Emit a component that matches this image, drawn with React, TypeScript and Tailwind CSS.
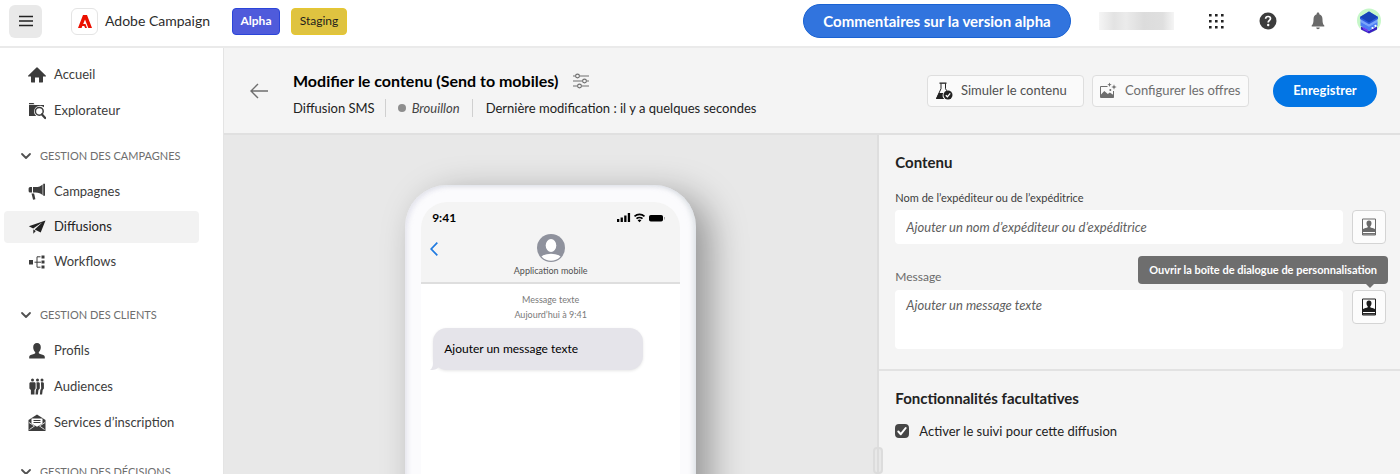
import type { ReactNode } from "react";

type IconProps = { className?: string };

function HomeIcon() {
  return (
    <svg viewBox="0 0 18 18" className="size-[18px]" fill="currentColor" aria-hidden="true">
      <path d="M17.700 9.600 9.500 1.400a.7.7 0 0 0-1 0L.3 9.600a.4.4 0 0 0 .3.8H3v5.700c0 .3.2.5.5.5H7V11.500h4v5.100h3.500c.3 0 .5-.2.5-.5v-5.700h2.400a.4.4 0 0 0 .3-.8z" />
    </svg>
  );
}

function ExplorerIcon() {
  return (
    <svg viewBox="0 0 18 18" className="size-[18px]" fill="currentColor" aria-hidden="true">
      <path d="M1 1h4.500l1 1.200H1z" />
      <path d="M1 3h15v2.300A6 6 0 0 0 6 9.300c0 2 .9 3.700 2.300 4.700H1z" />
      <circle cx="11.300" cy="9.300" r="3.900" fill="none" stroke="currentColor" strokeWidth="1.500" />
      <path d="m14 12.400 3.200 3.600" stroke="currentColor" strokeWidth="2.200" strokeLinecap="round" />
    </svg>
  );
}

function MegaphoneIcon() {
  return (
    <svg viewBox="0 0 18 18" className="size-[18px]" fill="currentColor" aria-hidden="true">
      <path d="M2.200 4H4v5.600H2.200A1.600 1.600 0 0 1 .6 8V5.600A1.600 1.600 0 0 1 2.200 4zM5 4h2.600c3 0 5.400-1 7-2.600v10.800c-1.600-1.600-4-2.600-7-2.600H5zM15.200.8h1.800v12h-1.800z" />
      <path d="M3.500 10.600h2.600l1.300 5.700-2.300.5z" />
    </svg>
  );
}

function PlaneIcon() {
  return (
    <svg viewBox="0 0 18 18" className="size-[18px]" fill="currentColor" aria-hidden="true">
      <path d="M17.500 2.500.8 8.200l4.400 2.300 9.200-6.200-7.700 7.200 6 3.100z" />
      <path d="M5.300 11.600v4.200l2.500-2.800z" />
    </svg>
  );
}

function WorkflowIcon() {
  return (
    <svg viewBox="0 0 18 18" className="size-[18px]" fill="currentColor" aria-hidden="true">
      <path d="M1 7h4v4.500H1zM13.500 2.500h3v3h-3zM13.500 7.500h3v3h-3zM13.500 12.500h3v3h-3z" />
      <path d="M6.500 9.200H13M12.500 3.800H9v10.400h3.500" fill="none" stroke="currentColor" />
    </svg>
  );
}

function ProfileIcon() {
  return (
    <svg viewBox="0 0 18 18" className="size-[18px]" fill="currentColor" aria-hidden="true">
      <path d="M9 1c2.500 0 3.800 1.700 3.800 4.200 0 2-.8 3.900-2 4.900v1.100c.3.500 1 .7 2.100 1 2.500.6 3.900 1.200 3.900 2.800v1.600H1.200V15c0-1.600 1.400-2.200 3.900-2.800 1.100-.3 1.800-.5 2.100-1v-1.100c-1.200-1-2-2.900-2-4.900C5.200 2.700 6.500 1 9 1z" />
    </svg>
  );
}

function AudienceIcon() {
  return (
    <svg viewBox="0 0 18 18" className="size-[18px]" fill="currentColor" aria-hidden="true">
      <circle cx="4.500" cy="2" r="1.500" />
      <circle cx="9.500" cy="2" r="1.500" />
      <circle cx="14" cy="2" r="1.500" />
      <path d="M2.600 4.200h3.800c.8 0 1.200.6 1.200 1.400v5L6.500 12v4.500H2.900V12L1.400 10.600v-5c0-.8.4-1.400 1.200-1.400z" />
      <path d="M8.500 4.200h1.800c1 0 1.500.6 1.500 1.400v4.800l-1.400 1.700-.5 4.400H7.500l.4-5 .8-1zM12.900 4.200h1.500c1 0 1.500.6 1.500 1.400v4.800l-1.200 1.700-.6 4.400h-2.200l.4-4.500.9-1.500z" />
    </svg>
  );
}

function EnvelopeIcon() {
  return (
    <svg viewBox="0 0 18 18" className="size-[18px]" fill="currentColor" aria-hidden="true">
      <path d="M9 .5 17.500 6v11H.5V6z" />
      <path d="M3.500 4.500h11v5L9 12.800 3.500 9.500z" fill="#fff" />
      <path d="M5.500 6.500h7M5.500 8.500h7" stroke="currentColor" />
      <path d="M1 8.500 6.500 12 1.500 15.500M17 8.500 11.500 12l5 3.500" fill="none" stroke="#fff" strokeWidth=".8" />
    </svg>
  );
}

function ChevronDown() {
  return (
    <svg viewBox="0 0 12 12" className="size-3 text-[#505050]" fill="none" stroke="currentColor" strokeWidth="1.800" strokeLinecap="round" strokeLinejoin="round" aria-hidden="true">
      <path d="m2 4 4 4 4-4" />
    </svg>
  );
}

function FlaskIcon() {
  return (
    <svg viewBox="0 0 18 18" className="size-[18px] text-[#222]" fill="currentColor" aria-hidden="true">
      <path d="M4.500.5h7v1.300h-7z" />
      <path d="M6 1.500v5.200L1.500 16.500h7M10.500 1.500v5.200l1.200 2" fill="none" stroke="currentColor" />
      <path d="M3.800 11h4.400a5.500 5.500 0 0 0 .8 6H1z" />
      <circle cx="13" cy="13" r="4.500" />
      <path d="m10.800 13.200 1.600 1.600 2.800-3.500" fill="none" stroke="#fff" strokeWidth="1.300" />
    </svg>
  );
}

function OfferIcon() {
  return (
    <svg viewBox="0 0 18 18" className="size-[18px] text-[#6e6e6e]" fill="currentColor" aria-hidden="true">
      <path d="M8.500 4.500H1.500v11h13V9" fill="none" stroke="currentColor" />
      <path d="M2 12.500 5.300 9l3.500 3 2-1.600 3.700 2.600v2.500H2z" />
      <circle cx="11.300" cy="8" r="1" />
      <path d="m10.500.5.6 1.600 1.600.6-1.600.6-.6 1.600-.6-1.600-1.600-.6 1.600-.6zM15 2.300l.7 2 2 .7-2 .7-.7 2-.7-2-2-.7 2-.7z" />
    </svg>
  );
}

function PersonalizeIcon({ className = "" }: IconProps) {
  return (
    <svg viewBox="0 0 18 18" className={"size-[18px] " + className} fill="currentColor" aria-hidden="true">
      <path d="M2.500 1h13v16h-13z" fill="none" stroke="currentColor" />
      <path d="M9 2.500c1.700 0 2.500 1.100 2.500 2.700 0 1.300-.5 2.400-1.200 3v1c.6.800 3.500.8 4.900 2V14H2.800v-2.800c1.400-1.200 4.300-1.200 4.900-2v-1c-.7-.6-1.200-1.700-1.200-3C6.500 3.600 7.300 2.500 9 2.500z" />
      <path d="M3 15.800h12" stroke="currentColor" strokeWidth="1.500" />
      <path d="M4 14.500h2.200M7.500 14.500H14" stroke="#fff" />
    </svg>
  );
}

function FiltersIcon() {
  return (
    <svg viewBox="0 0 18 18" className="size-[18px] text-[#6e6e6e]" fill="none" stroke="currentColor" strokeWidth="1.100" aria-hidden="true">
      <path d="M1 4h2.500M7.500 4H17M1 9h9.500M14.500 9H17M1 14h4.500M9.500 14H17" />
      <circle cx="5.500" cy="4" r="1.900" />
      <circle cx="12.500" cy="9" r="1.900" />
      <circle cx="7.500" cy="14" r="1.900" />
    </svg>
  );
}

function AdobeMark() {
  return (
    <svg viewBox="0 0 14 13" className="h-[13px] w-[14px]" fill="#eb1000" aria-hidden="true">
      <path d="M5 0h4l5 13h-3.700L7 4.500 5.200 9h2.300l1.500 4H7.100l-.9-1.900H4.300L3.600 13H0z" />
    </svg>
  );
}

function Avatar() {
  return (
    <svg viewBox="0 0 24 26" className="h-[26px] w-6" role="img" aria-label="Profil utilisateur">
      <circle cx="12" cy="12.500" r="12" fill="#c6f7c8" />
      <path d="m4 18.500 8 4.300 8-4.300v3L12 25.500l-8-4z" fill="#3a1fc4" />
      <path d="m3.500 13.500 8.500 4.500 8.500-4.500v4.300L12 22.800l-8.500-5z" fill="#4a7cf5" />
      <path d="m3.500 11 8.500 4.800 8.500-4.800v3L12 18.800 3.500 14z" fill="#7aa5fb" />
      <path d="m12 3.500 9 5.500v2l-9 5.200L3 11V9z" fill="#2e5be0" />
      <path d="m12 3.500 9 5.500-9 5.500L3 9z" fill="#1744b8" />
      <path d="m6 19 5 2.700v2.200l-5-2.600z" fill="#6f3df0" />
      <circle cx="15.500" cy="20" r="1.100" fill="#fff" />
      <circle cx="18.500" cy="17.800" r="1.100" fill="#fff" />
    </svg>
  );
}

type NavEntry = { label: string; icon: ReactNode; active?: boolean };

function NavList({ items, gap }: { items: NavEntry[]; gap: string }) {
  return (
    <ul className={"flex flex-col " + gap}>
      {items.map((item) => (
        <li key={item.label}>
          <a
            href="#"
            aria-current={item.active ? "page" : undefined}
            className={
              "ml-1 mr-6 flex h-8 items-center gap-2 rounded pl-6 text-[13px] " +
              (item.active ? "bg-[#f2f2f2] text-[#222]" : "text-[#3c3c3c]")
            }
          >
            {item.icon}
            {item.label}
          </a>
        </li>
      ))}
    </ul>
  );
}

function SectionToggle({ children }: { children: ReactNode }) {
  return (
    <button type="button" className="flex h-4 items-center gap-2 pl-5 text-[11px] leading-4 text-[#6e6e6e]">
      <ChevronDown />
      {children}
    </button>
  );
}

function Sidebar() {
  return (
    <nav className="flex w-[223px] shrink-0 flex-col overflow-hidden bg-white pt-[11px]">
      <NavList
        gap="gap-1"
        items={[
          { label: "Accueil", icon: <HomeIcon /> },
          { label: "Explorateur", icon: <ExplorerIcon /> },
        ]}
      />
      <div className="mt-[21px] flex flex-col gap-3">
        <SectionToggle>GESTION DES CAMPAGNES</SectionToggle>
        <NavList
          gap="gap-[3px]"
          items={[
            { label: "Campagnes", icon: <MegaphoneIcon /> },
            { label: "Diffusions", icon: <PlaneIcon />, active: true },
            { label: "Workflows", icon: <WorkflowIcon /> },
          ]}
        />
      </div>
      <div className="mt-[29px] flex flex-col gap-3">
        <SectionToggle>GESTION DES CLIENTS</SectionToggle>
        <NavList
          gap="gap-1"
          items={[
            { label: "Profils", icon: <ProfileIcon /> },
            { label: "Audiences", icon: <AudienceIcon /> },
            { label: "Services d’inscription", icon: <EnvelopeIcon /> },
          ]}
        />
      </div>
      <div className="mt-[25px]">
        <SectionToggle>GESTION DES DÉCISIONS</SectionToggle>
      </div>
    </nav>
  );
}

function TopBar() {
  return (
    <header className="flex h-12 shrink-0 items-center border-b-2 border-[#eaeaea] bg-white pb-1 pl-[9px] pr-[19px]">
      <button type="button" aria-label="Menu" className="flex size-[33px] items-center justify-center rounded-md bg-[#e9e9e9] text-[#222]">
        <svg viewBox="0 0 14 12" className="h-3 w-[14px]" stroke="currentColor" strokeWidth="1.600" aria-hidden="true">
          <path d="M0 1.500h14M0 6h14M0 10.500h14" />
        </svg>
      </button>
      <div className="ml-[29px] flex items-center gap-[7px]">
        <span className="flex size-[27px] items-center justify-center rounded-md border border-[#e4e4e4]">
          <AdobeMark />
        </span>
        <span className="text-sm text-[#2c2c2c]">Adobe Campaign</span>
      </div>
      <div className="ml-[22px] flex gap-[11px] text-xs">
        <span className="flex h-[27px] w-12 items-center justify-center rounded border border-[#2b45d9] bg-[#4f5bdb] font-bold text-white">Alpha</span>
        <span className="flex h-[27px] w-14 items-center justify-center rounded border border-[#e6c72f] bg-[#dfc340] text-[#1d1d1d]">Staging</span>
      </div>
      <button type="button" className="ml-auto flex h-[34px] w-[268px] items-center justify-center rounded-full border border-[#1a62d2] bg-[#3174de] text-[15px] font-bold text-white">
        Commentaires sur la version alpha
      </button>
      <div className="ml-7 h-[18px] w-[75px] bg-[linear-gradient(90deg,#f5f5f5,#e3e3e3_20%,#ebebeb_36%,#dcdcdc_60%,#dfdfdf_85%,#f5f5f5)]" />
      <button type="button" aria-label="Applications" className="ml-[35px] text-[#222]">
        <svg viewBox="0 0 15 15" className="size-[15px]" fill="currentColor" aria-hidden="true">
          <path d="M0 0h2.600v2.600H0zM6 0h2.600v2.600H6zM12 0h2.600v2.600H12zM0 6h2.600v2.600H0zM6 6h2.600v2.600H6zM12 6h2.600v2.600H12zM0 12h2.600v2.600H0zM6 12h2.600v2.600H6zM12 12h2.600v2.600H12z" />
        </svg>
      </button>
      <button type="button" aria-label="Aide" className="ml-[35px]">
        <svg viewBox="0 0 18 18" className="size-[18px]" aria-hidden="true">
          <circle cx="9" cy="9" r="8.500" fill="#3c3c3c" />
          <path d="M6.600 6.700C6.700 5.300 7.700 4.500 9.100 4.500s2.400.8 2.400 2.100c0 1.700-2.300 1.800-2.300 3.900" fill="none" stroke="#fff" strokeWidth="1.700" />
          <circle cx="9.200" cy="13" r="1.200" fill="#fff" />
        </svg>
      </button>
      <button type="button" aria-label="Notifications" className="ml-8 text-[#6a6a6a]">
        <svg viewBox="0 0 18 18" className="size-[18px]" fill="currentColor" aria-hidden="true">
          <path d="M9 .5c.8 0 1.300.5 1.300 1.300v.4c2.100.6 3.200 2.500 3.200 5.100 0 4 .8 5.300 1.800 6.200v1H2.700v-1c1-.9 1.800-2.200 1.800-6.200 0-2.600 1.100-4.500 3.200-5.100v-.4C7.700 1 8.200.5 9 .5zM7.200 15.500h3.600a1.800 1.800 0 0 1-3.600 0z" />
        </svg>
      </button>
      <button type="button" aria-label="Compte" className="ml-[30px]">
        <Avatar />
      </button>
    </header>
  );
}

function PageHeader() {
  return (
    <div className="flex h-[87px] shrink-0 items-center border-b-2 border-[#e0e0e0] bg-[#f4f4f4] pl-[26px] pr-[23px]">
      <button type="button" aria-label="Retour" className="text-[#6e6e6e]">
        <svg viewBox="0 0 18 16" className="h-4 w-[18px]" fill="none" stroke="currentColor" strokeWidth="1.400" aria-hidden="true">
          <path d="M18 8H1M8 1 1 8l7 7" />
        </svg>
      </button>
      <div className="ml-[25px] flex flex-col gap-2 pt-[6px]">
        <div className="flex items-center gap-[14px]">
          <h1 className="text-base font-bold leading-5 text-black">Modifier le contenu (Send to mobiles)</h1>
          <button type="button" aria-label="Paramètres">
            <FiltersIcon />
          </button>
        </div>
        <div className="flex h-[18px] items-center text-[13px] leading-[18px] text-[#222]">
          <span className="pr-[10px]">Diffusion SMS</span>
          <span className="flex items-center gap-[6px] border-x border-[#d0d0d0] px-3 italic text-[#444]">
            <span className="size-2 rounded-full bg-[#8e8e8e]" />
            Brouillon
          </span>
          <span className="pl-[13px]">Dernière modification : il y a quelques secondes</span>
        </div>
      </div>
      <div className="ml-auto flex items-center gap-2 text-[13px]">
        <button type="button" className="flex h-8 min-w-[157px] items-center gap-2 rounded border border-[#dedede] bg-[#fafafa] px-[7px] text-[#505050]">
          <FlaskIcon />
          Simuler le contenu
        </button>
        <button type="button" className="flex h-8 min-w-[157px] items-center gap-2 rounded border border-[#dedede] bg-[#fafafa] px-[6px] text-[#6e6e6e]">
          <OfferIcon />
          Configurer les offres
        </button>
        <button type="button" className="ml-4 flex h-8 w-[104px] items-center justify-center rounded-full bg-[#0275e4] text-[13px] font-bold text-white">
          Enregistrer
        </button>
      </div>
    </div>
  );
}

function PhonePreview() {
  return (
    <section aria-label="Aperçu" className="flex min-w-0 justify-center overflow-hidden bg-[#e8e8e8] pt-[50px]">
      <div className="h-[560px] w-[291px] rounded-[42px] bg-[#fbfbfd] px-4 pt-[17px] shadow-[14px_10px_36px_rgba(0,0,0,0.36),inset_-3px_0_5px_rgba(205,212,216,0.6),inset_3px_2px_4px_rgba(225,225,235,0.7)]">
        <div className="flex h-full flex-col overflow-hidden rounded-t-[26px] bg-white">
          <div className="h-[82px] shrink-0 border-b-2 border-[#dedede] bg-[#f4f4f4] px-[11px] pt-2">
            <div className="flex h-4 items-center justify-between">
              <span className="text-xs font-bold text-black">9:41</span>
              <svg viewBox="0 0 48 10" className="mr-1 h-[10px] w-12" fill="#000" aria-hidden="true">
                <path d="M0 6h2.300v3H0zM3.600 4.500h2.300V9H3.600zM7.200 2.500h2.300V9H7.200zM10.800 0h2.300v9h-2.300z" />
                <path d="M17.500 3.400a7.300 7.300 0 0 1 10 0M19.500 5.700a4.400 4.400 0 0 1 6 0" fill="none" stroke="#000" strokeWidth="1.600" />
                <path d="m22.500 9.300-1.900-2a2.800 2.800 0 0 1 3.800 0z" />
                <rect x="32" y="2" width="14" height="6.500" rx="1.800" />
                <path d="M47 4h.8v2.500H47z" opacity=".4" />
              </svg>
            </div>
            <div className="grid grid-cols-[1fr_auto_1fr] items-center pt-2">
              <button type="button" aria-label="Retour" className="-ml-[2px] pb-[14px] text-[#1f7ae0]">
                <svg viewBox="0 0 8 14" className="h-[14px] w-2" fill="none" stroke="currentColor" strokeWidth="1.700" aria-hidden="true">
                  <path d="M7.300.7 1.200 7l6.100 6.300" />
                </svg>
              </button>
              <div className="flex flex-col items-center gap-[3px]">
                <svg viewBox="0 0 28 28" className="size-7" aria-hidden="true">
                  <defs>
                    <clipPath id="contact">
                      <circle cx="14" cy="14" r="12.800" />
                    </clipPath>
                  </defs>
                  <circle cx="14" cy="14" r="14" fill="#8f929d" />
                  <g clipPath="url(#contact)" fill="#fff">
                    <ellipse cx="14" cy="11.500" rx="5.300" ry="6.500" />
                    <ellipse cx="14" cy="25" rx="11" ry="5.300" />
                  </g>
                </svg>
                <span className="text-[9px] leading-3 text-[#505050]">Application mobile</span>
              </div>
            </div>
          </div>
          <div className="pt-2 text-center text-[9px] leading-[15px] text-[#7a7a7a]">
            <p>Message texte</p>
            <p>Aujourd’hui à 9:41</p>
          </div>
          <div className="relative ml-3 mt-[6px] flex h-[42px] w-[210px] shrink-0 items-center rounded-[14px] bg-[#e5e4ea] pl-[11px] text-xs text-black shadow-[0_1px_3px_rgba(0,0,0,0.1)]">
            <svg viewBox="0 0 12 14" className="absolute bottom-0 -left-[3px] h-[14px] w-3" fill="#e5e4ea" aria-hidden="true">
              <path d="M3 0v7c0 3-1 5.500-3 7 3 .2 5.500-.3 7.500-1.700L12 8z" />
            </svg>
            Ajouter un message texte
          </div>
        </div>
      </div>
    </section>
  );
}

function PersonalizeButton({ dark = false }: { dark?: boolean }) {
  return (
    <button
      type="button"
      aria-label="Ouvrir la boîte de dialogue de personnalisation"
      className="flex size-[34px] shrink-0 items-center justify-center rounded border border-[#d4d4d4] bg-[#fcfcfc]"
    >
      <PersonalizeIcon className={dark ? "text-[#1c1c1c]" : "text-[#6a6a6a]"} />
    </button>
  );
}

function ContentPanel() {
  return (
    <section className="relative flex min-w-0 flex-col border-l-2 border-[#dedede] bg-[#f4f4f4]">
      <div className="absolute -left-[6px] top-[312px] flex h-[27px] w-[10px] justify-center rounded-sm border-2 border-[#dcdcdc] bg-[#e8e8e8]">
        <span className="h-full w-[2px] bg-[#dcdcdc]" />
      </div>
      <div className="border-b-2 border-[#e2e2e2] pb-5 pl-4 pr-[14px] pt-[17px]">
        <h2 className="text-[15px] font-bold leading-5 text-[#222]">Contenu</h2>
        <label htmlFor="sender" className="mt-[18px] block text-[11px] leading-4 text-[#3c3c3c]">
          Nom de l’expéditeur ou de l’expéditrice
        </label>
        <div className="mt-1 flex gap-[9px]">
          <input
            id="sender"
            type="text"
            placeholder="Ajouter un nom d’expéditeur ou d’expéditrice"
            className="h-[34px] min-w-0 flex-1 rounded bg-white px-[11px] text-[13px] placeholder:italic placeholder:text-[#5e5e5e]"
          />
          <PersonalizeButton />
        </div>
        <label htmlFor="message" className="mt-[25px] block text-xs leading-4 text-[#6a6a6a]">
          Message
        </label>
        <div className="mt-[5px] flex gap-[9px]">
          <textarea
            id="message"
            placeholder="Ajouter un message texte"
            className="h-[59px] min-w-0 flex-1 resize-none rounded bg-white px-[11px] py-[5px] text-[13px] leading-5 placeholder:italic placeholder:text-[#5e5e5e]"
          />
          <div className="relative">
            <PersonalizeButton dark />
            <div role="tooltip" className="absolute bottom-full -right-[2px] mb-[6px] flex h-7 items-center whitespace-nowrap rounded bg-[#6e6e6e] px-[11px] text-[11px] font-bold text-white">
              Ouvrir la boîte de dialogue de personnalisation
              <span className="absolute -bottom-1 right-[14px] border-x-4 border-t-4 border-x-transparent border-t-[#6e6e6e]" />
            </div>
          </div>
        </div>
      </div>
      <div className="pl-4 pr-[14px] pt-[17px]">
        <h2 className="text-[15px] font-bold leading-5 text-[#222]">Fonctionnalités facultatives</h2>
        <label className="mt-[13px] flex items-center gap-[10px] text-[13px] leading-5 text-[#222]">
          <span className="relative flex size-[14px]">
            <input type="checkbox" defaultChecked className="size-[14px] appearance-none rounded-sm border-2 border-[#464646] checked:bg-[#464646]" />
            <svg viewBox="0 0 14 14" className="pointer-events-none absolute inset-0 size-[14px]" fill="none" stroke="#fff" strokeWidth="2" strokeLinecap="round" strokeLinejoin="round" aria-hidden="true">
              <path d="m3.300 7.500 2.500 2.700 4.900-6.200" />
            </svg>
          </span>
          Activer le suivi pour cette diffusion
        </label>
      </div>
    </section>
  );
}

export default function App() {
  return (
    <div className="flex h-screen flex-col overflow-hidden bg-[#f4f4f4] font-['Lato','Noto_Sans',sans-serif]">
      <TopBar />
      <div className="flex min-h-0 flex-1">
        <Sidebar />
        <main className="flex min-w-0 flex-1 flex-col border-l border-[#e4e4e4]">
          <PageHeader />
          <div className="grid min-h-0 flex-1 grid-cols-[5fr_4fr]">
            <PhonePreview />
            <ContentPanel />
          </div>
        </main>
      </div>
    </div>
  );
}
